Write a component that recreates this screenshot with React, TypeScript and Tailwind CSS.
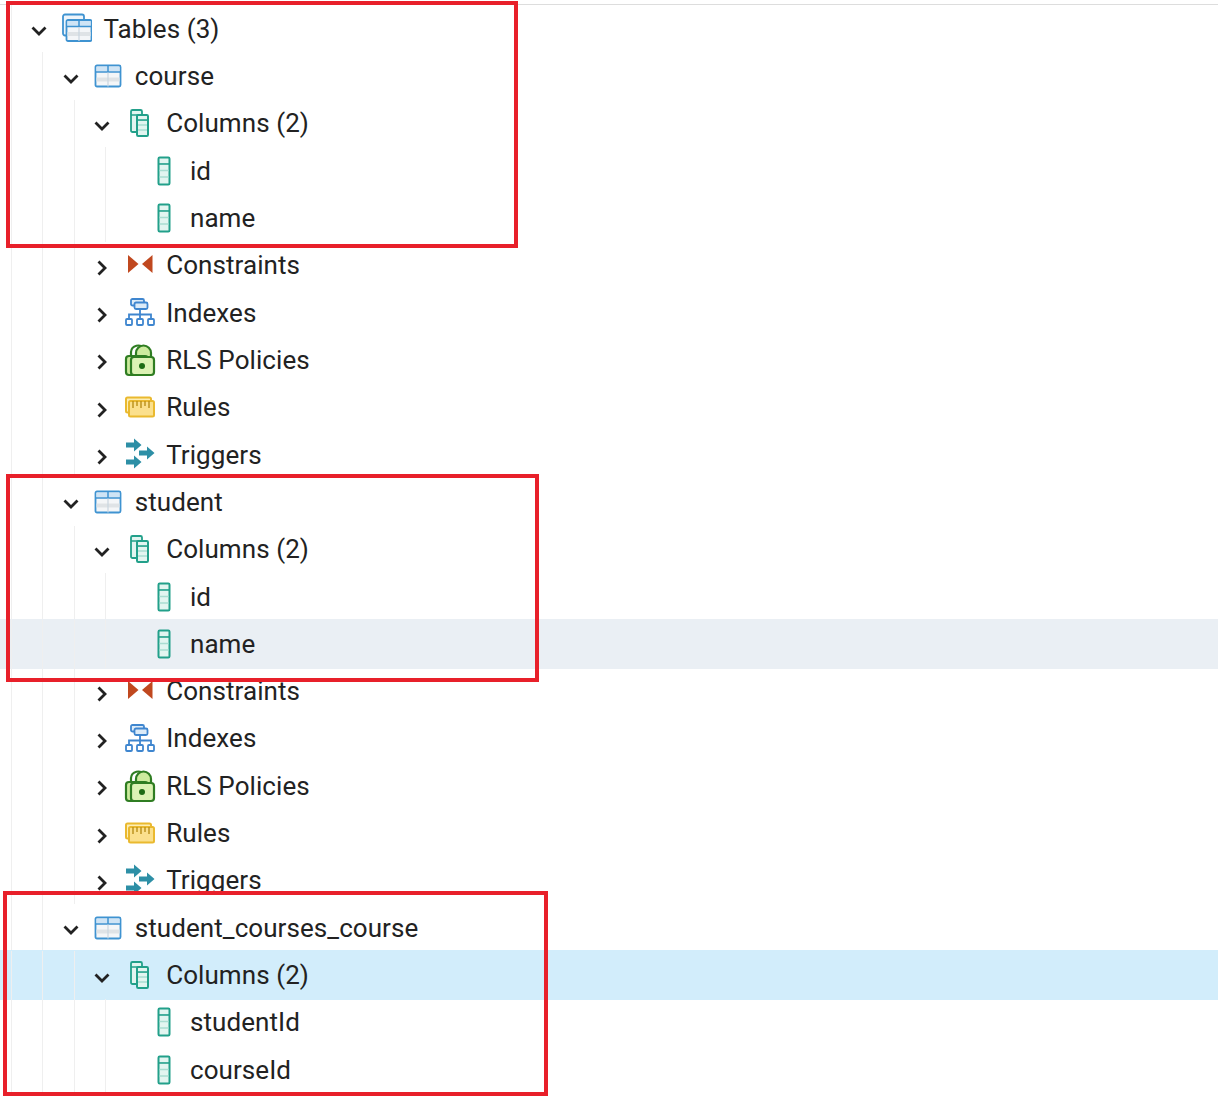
import React from 'react';

type IconName = 'tables' | 'table' | 'columns' | 'column' | 'constraints' | 'indexes' | 'rls' | 'rules' | 'triggers';

interface Row {
  depth: number;
  label: string;
  icon: IconName;
  open?: boolean;
  leaf?: boolean;
  tone?: 'hover' | 'selected';
}

function tableRows(name: string, columns: string[], tones: { columns?: 'selected'; last?: 'hover' } = {}): Row[] {
  return [
    { depth: 1, label: name, icon: 'table', open: true },
    { depth: 2, label: 'Columns (2)', icon: 'columns', open: true, tone: tones.columns },
    ...columns.map((c, i): Row => ({
      depth: 3,
      label: c,
      icon: 'column',
      leaf: true,
      tone: i === columns.length - 1 ? tones.last : undefined,
    })),
  ];
}

const childRows: Row[] = [
  { depth: 2, label: 'Constraints', icon: 'constraints' },
  { depth: 2, label: 'Indexes', icon: 'indexes' },
  { depth: 2, label: 'RLS Policies', icon: 'rls' },
  { depth: 2, label: 'Rules', icon: 'rules' },
  { depth: 2, label: 'Triggers', icon: 'triggers' },
];

const rows: Row[] = [
  { depth: 0, label: 'Tables (3)', icon: 'tables', open: true },
  ...tableRows('course', ['id', 'name']),
  ...childRows,
  ...tableRows('student', ['id', 'name'], { last: 'hover' }),
  ...childRows,
  ...tableRows('student_courses_course', ['studentId', 'courseId'], { columns: 'selected' }),
];

function Chevron({ open }: { open?: boolean }) {
  return (
    <svg width="16" height="16" viewBox="0 0 16 16" fill="none" stroke="#222222" strokeWidth="2.800" className="mt-[5px] shrink-0">
      {open ? <path d="M1.500 4.500 8 11l6.500-6.500" /> : <path d="M4.500 1.500 11 8l-6.500 6.500" />}
    </svg>
  );
}

function TableGrid({ x, y }: { x: number; y: number }) {
  return (
    <g>
      <rect x={x} y={y} width="25" height="21" rx="1.500" fill="#f4f6f8" stroke="#3f93d1" strokeWidth="1.800" />
      <rect x={x + 1} y={y + 1} width="23" height="5" fill="#cfe4f5" />
      <rect x={x + 1} y={y + 12} width="23" height="4" fill="#dfe3e6" />
      <path d={`M${x} ${y + 6.500}h25M${x + 12.500} ${y}v7`} stroke="#3f93d1" strokeWidth="1.500" />
      <path d={`M${x + 12.500} ${y + 7}v14`} stroke="#c9d6df" strokeWidth="1.200" />
    </g>
  );
}

function ColumnBar({ x, y, h }: { x: number; y: number; h: number }) {
  return (
    <g>
      <rect x={x} y={y} width="11" height={h} rx="1.200" fill="#e2f5f0" stroke="#22a08a" strokeWidth="2" />
      <path d={`M${x} ${y + h * 0.24}h11`} stroke="#22a08a" strokeWidth="1.600" />
      <path d={`M${x + 1} ${y + h * 0.48}h9M${x + 1} ${y + h * 0.72}h9`} stroke="#a9ddd1" strokeWidth="1.500" />
    </g>
  );
}

function Arrow({ x, y }: { x: number; y: number }) {
  return <path d={`M${x} ${y - 2.500}h8v-4l7.500 6.500-7.500 6.500v-4h-8z`} fill="#2d8fa6" />;
}

function TreeIcon({ name }: { name: IconName }) {
  if (name === 'tables') {
    return (
      <svg width="30" height="30" viewBox="0 0 30 30" className="-mt-[1px]">
        <rect x="1" y="1.500" width="21" height="21" rx="2" fill="#eef5fb" stroke="#3f93d1" strokeWidth="1.800" />
        <TableGrid x={4.500} y={7} />
      </svg>
    );
  }
  if (name === 'table') {
    return (
      <svg width="28" height="24" viewBox="0 0 28 24" className="-ml-px">
        <TableGrid x={1.500} y={1.500} />
      </svg>
    );
  }
  if (name === 'columns') {
    return (
      <svg width="24" height="30" viewBox="0 0 24 30">
        <rect x="3" y="2" width="11" height="22" rx="1.500" fill="#e2f5f0" stroke="#22a08a" strokeWidth="1.800" />
        <path d="M3 7h11" stroke="#22a08a" strokeWidth="1.500" />
        <ColumnBar x={9} y={7} h={21} />
      </svg>
    );
  }
  if (name === 'column') {
    return (
      <svg width="16" height="30" viewBox="0 0 16 30">
        <ColumnBar x={2.500} y={1.500} h={27} />
      </svg>
    );
  }
  if (name === 'constraints') {
    return (
      <svg width="28" height="20" viewBox="0 0 28 20" className="-mt-[2px]">
        <path d="M2 1 12.500 10 2 19z" fill="#c0481f" />
        <path d="M26.500 1 16 10l10.500 9z" fill="#c0481f" />
      </svg>
    );
  }
  if (name === 'indexes') {
    return (
      <svg width="30" height="28" viewBox="0 0 30 28" fill="none" stroke="#3f86cf" strokeWidth="1.800" className="-mt-px">
        <rect x="6" y="1" width="13" height="6.500" rx="1.500" fill="#dcebf8" />
        <rect x="9.500" y="4.500" width="13" height="6.500" rx="1.500" fill="#dcebf8" />
        <path d="M15 11v5.500M4 21v-4.500h22V21M15 16.500V21" />
        <rect x="1" y="21" width="6" height="6" rx="1" fill="#fff" />
        <rect x="12" y="21" width="6" height="6" rx="1" fill="#fff" />
        <rect x="23" y="21" width="6" height="6" rx="1" fill="#fff" />
      </svg>
    );
  }
  if (name === 'rls') {
    return (
      <svg width="32" height="34" viewBox="0 0 32 34" fill="none" stroke="#2f7d22" strokeWidth="2.200">
        <path d="M7 15V9a7 7 0 0 1 13-3" />
        <path d="M12 15V10a7.500 7.500 0 0 1 15 0v6" fill="#cdeb9e" />
        <rect x="2" y="13" width="22" height="19" rx="3" fill="#cdeb9e" />
        <rect x="7" y="14" width="23" height="18" rx="3" fill="#dcf2b4" />
        <circle cx="18" cy="23" r="3" fill="#1d6b14" stroke="none" />
      </svg>
    );
  }
  if (name === 'rules') {
    return (
      <svg width="30" height="22" viewBox="0 0 30 22" fill="none" stroke="#eab92f" strokeWidth="2">
        <rect x="1" y="1.500" width="25" height="15" rx="1.500" fill="#fdeeb5" />
        <rect x="4" y="5" width="25" height="15.500" rx="1.500" fill="#fbe08d" />
        <path d="M8 5v7M12 5v5M16 5v7M20 5v5M24 5v7" stroke="#b98f1a" strokeWidth="1.400" />
      </svg>
    );
  }
  return (
    <svg width="30" height="32" viewBox="0 0 30 32" className="-mt-[3px]">
      <Arrow x={1} y={8} />
      <Arrow x={1} y={25} />
      <Arrow x={14} y={16} />
    </svg>
  );
}

function TreeRow({ row }: { row: Row }) {
  const guides = Array.from({ length: row.depth + 1 });
  return (
    <div className="relative flex h-[47.32px] items-stretch pl-[11px]">
      {row.tone === 'hover' && <div className="absolute inset-x-0 -inset-y-px bg-[#eaeff4]" />}
      {row.tone === 'selected' && <div className="absolute inset-x-0 -inset-y-px bg-[#d2edfb]" />}
      {guides.map((_, i) => (
        <div key={i} className="relative w-[31.4px] shrink-0 border-l-[1.5px] border-[#efefef]" />
      ))}
      <div className="relative -ml-[11px] flex items-center">
        <div className={row.leaf ? 'w-[24.4px]' : 'flex w-[32px] items-center'}>
          {!row.leaf && <Chevron open={row.open} />}
        </div>
        <div className="flex h-[28px] w-[28px] items-center justify-center [&>svg]:shrink-0">
          <TreeIcon name={row.icon} />
        </div>
        <span className="ml-[12px] whitespace-nowrap text-[26px] leading-none tracking-[0.07px] text-[#222222]">{row.label}</span>
      </div>
    </div>
  );
}

export default function App() {
  return (
    <div className="relative h-[1096px] w-[1218px] overflow-hidden bg-white font-['Roboto',sans-serif]">
      <div className="mt-[3.500px] h-[1.500px] bg-[#dddddd]" />
      <div className="mt-[0.150px]">
        {rows.map((row, i) => (
          <TreeRow key={i} row={row} />
        ))}
      </div>
      {/* annotation boxes drawn over the tree */}
      <div className="absolute left-[6px] top-[1px] h-[247px] w-[512px] border-[4px] border-[#e8202a]" />
      <div className="absolute left-[6px] top-[474px] h-[208px] w-[533px] border-[4px] border-[#e8202a]" />
      <div className="absolute left-[3px] top-[891px] h-[205px] w-[545px] border-[4px] border-[#e8202a]" />
    </div>
  );
}
